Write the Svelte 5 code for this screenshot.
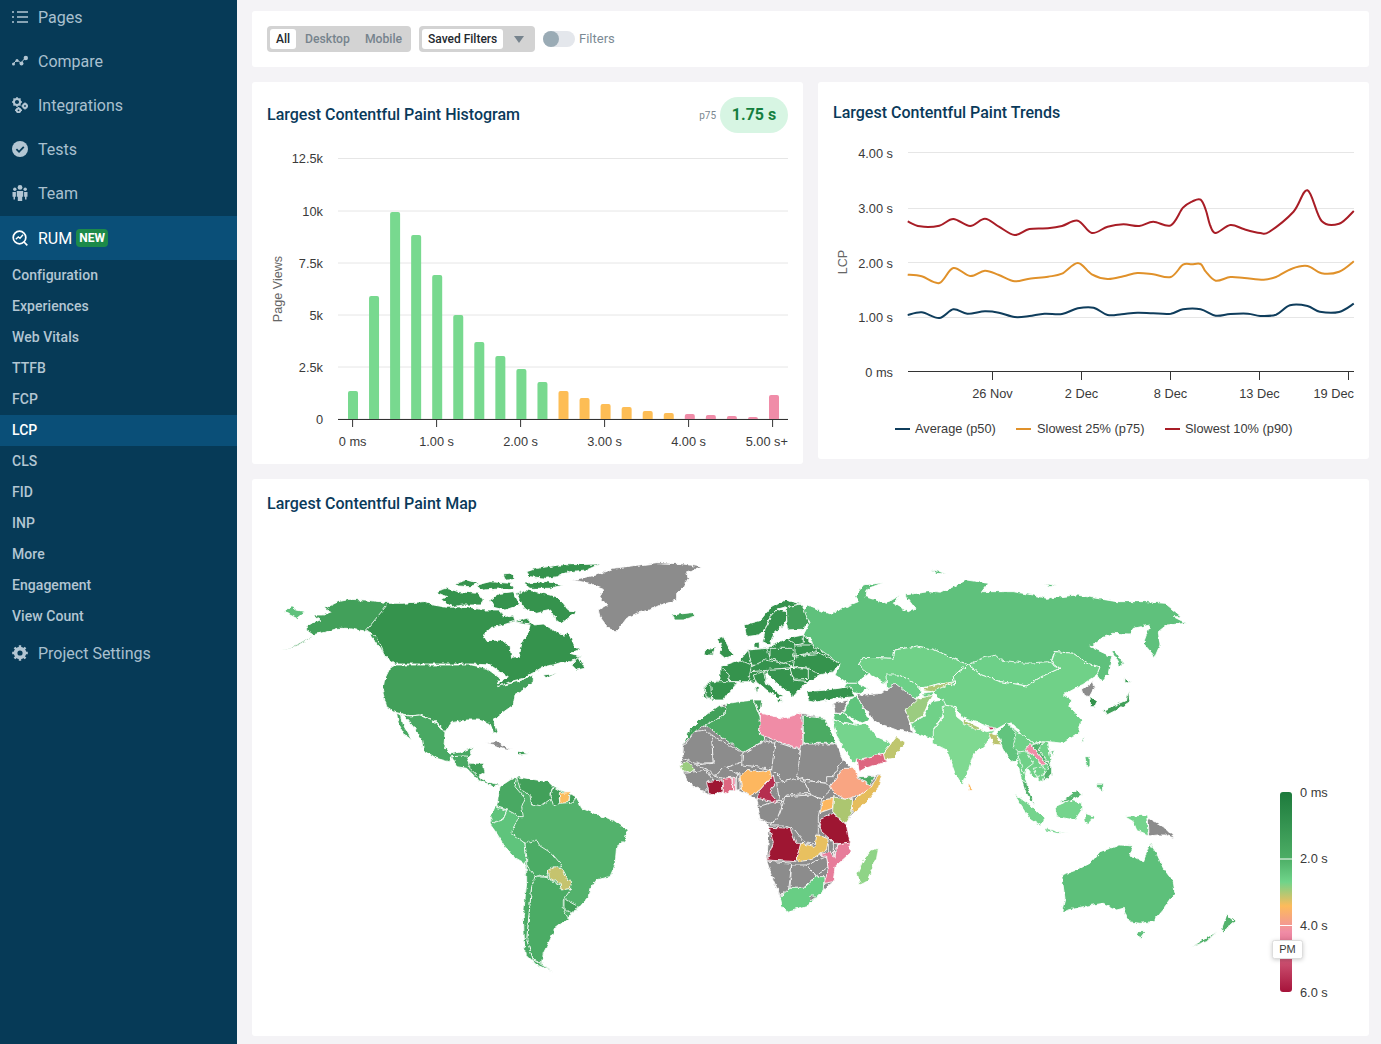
<script>
  const primary = ['Pages', 'Compare', 'Integrations', 'Tests', 'Team'];
  const subs = ['Configuration','Experiences','Web Vitals','TTFB','FCP','LCP','CLS','FID','INP','More','Engagement','View Count'];

  const G='#78d98f', O='#fdbd55', P='#f08ca8';
  const heights=[391,296,212,235,275,315,342,356,369,382,391,398,404,407,411,413,414,415,416,417,395];
  const bars=heights.map((top,i)=>({x:348+i*21.05,top,fill:i<10?G:i<16?O:P}));
  const histGrid=[[158.5,'12.5k'],[211,'10k'],[263,'7.5k'],[315,'5k'],[367,'2.5k'],[419,'0']];
  const histX=[[352.6,'0 ms'],[436.6,'1.00 s'],[520.6,'2.00 s'],[604.6,'3.00 s'],[688.6,'4.00 s'],[772.6,'5.00 s+']];
  const trendGrid=[[152.5,157.5,'4.00 s'],[208.5,212.5,'3.00 s'],[262.5,267.5,'2.00 s'],[317.5,321.5,'1.00 s'],[371.5,376.5,'0 ms']];
  const trendX=[[992.5,'26 Nov'],[1081.5,'2 Dec'],[1170.5,'8 Dec'],[1259.5,'13 Dec'],[1348.5,'19 Dec']];

  function smooth(z){
    const p=z.map(([x,y])=>[820+x/2.851,85+y/3]);
    let d=`M${p[0][0].toFixed(1)} ${p[0][1].toFixed(1)}`;
    for(let i=0;i<p.length-1;i++){
      const a=p[Math.max(i-1,0)],b=p[i],c=p[i+1],e=p[Math.min(i+2,p.length-1)];
      const c1=[b[0]+(c[0]-a[0])/6,b[1]+(c[1]-a[1])/6],c2=[c[0]-(e[0]-b[0])/6,c[1]-(e[1]-b[1])/6];
      d+=`C${c1[0].toFixed(1)} ${c1[1].toFixed(1)} ${c2[0].toFixed(1)} ${c2[1].toFixed(1)} ${c[0].toFixed(1)} ${c[1].toFixed(1)}`;
    }
    return d;
  }
  const lines=[
    ['#0f3d5c',[[250,690],[290,682],[340,699],[380,673],[420,686],[470,679],[510,683],[555,696],[597,693],[640,686],[690,687],[735,670],[780,668],[820,690],[860,688],[905,683],[950,685],[1000,686],[1035,673],[1085,673],[1128,692],[1170,687],[1220,686],[1255,693],[1300,689],[1340,661],[1390,663],[1425,680],[1480,681],[1522,656]]],
    ['#e0912a',[[250,569],[290,574],[340,594],[380,549],[428,573],[470,557],[510,570],[555,589],[597,581],[650,575],[690,566],[735,534],[775,568],[820,582],[865,574],[905,564],[950,568],[1000,576],[1035,539],[1060,538],[1085,537],[1100,560],[1128,587],[1170,576],[1210,579],[1265,584],[1300,576],[1345,551],[1390,543],[1430,565],[1480,560],[1522,529]]],
    ['#a81d26',[[250,409],[285,424],[340,422],[380,402],[428,423],[470,401],[510,425],[555,450],[597,432],[650,430],[690,423],[735,407],[775,444],[820,425],[865,418],[910,423],[950,410],[1000,421],[1035,368],[1062,349],[1085,344],[1100,375],[1112,420],[1128,444],[1170,420],[1210,433],[1255,444],[1280,441],[1350,380],[1390,316],[1430,408],[1480,416],[1522,378]]]
  ].map(([c,z])=>[c,smooth(z)]);
  const legend=[[895,915,'#0f3d5c','Average (p50)'],[1016,1037,'#e0912a','Slowest 25% (p75)'],[1165,1185,'#a81d26','Slowest 10% (p90)']];

  const CA='#35934e',US='#42a05a',MX='#4aa963',BR='#52b26c',PE='#5fc47c',RU='#5ec17b',CN='#6fd188',IN='#7fd991',AU='#5dc07a',GY='#8c8c8c',DR='#9e1232',PK='#f08ca6',OR='#fdb75f',ID='#74d48d';
  const americas=[
    [RU,'45,185 65,168 80,180 105,185 80,205 60,195'],
    [US,'355,158 285,150 240,148 205,155 165,175 185,185 160,195 130,195 150,210 115,225 105,238 130,255 170,245 205,235 230,235 262,240 290,243 320,260 345,290 345,310 325,290 300,255'],
    [US,'120,264 85,285 30,305 90,278 125,258'],
    [CA,'355,160 400,160 460,155 490,165 530,172 590,170 640,180 690,180 700,200 730,195 735,215 770,205 790,225 820,222 850,240 880,258 895,245 915,290 930,298 900,310 935,320 905,335 880,335 850,345 820,350 790,368 760,385 720,395 685,410 680,405 715,380 690,365 660,345 605,342 375,342 345,320 330,280 320,262 290,240'],
    ['#fff','640,255 665,232 690,228 730,215 780,222 775,250 755,280 748,320 725,322 720,290 695,270 650,272'],
    [CA,'495,125 530,115 565,125 625,130 640,150 630,165 580,165 545,170 515,150 530,140'],
    [CA,'555,100 590,90 625,100 600,110 565,108'],[CA,'620,105 660,95 720,100 730,115 670,118 640,120'],
    [CA,'770,65 800,55 870,45 990,42 950,60 900,65 860,80 830,85 780,80'],
    [CA,'740,130 770,120 800,125 860,140 880,160 895,180 920,185 875,220 850,200 845,180 800,190 760,175'],
    [CA,'690,130 730,125 750,165 705,180 670,172 660,150'],[CA,'700,75 725,72 735,85 705,88'],[CA,'760,100 830,95 880,105 840,115 780,115'],
    [CA,'905,345 925,320 945,355 920,360'],[CA,'820,375 860,370 830,385'],
    [GY,'905,90 980,75 1030,55 1160,38 1240,42 1300,52 1250,65 1255,85 1240,110 1220,130 1220,150 1170,165 1140,180 1100,190 1070,205 1040,245 1015,235 990,200 985,180 1010,165 990,140 1000,115 960,100'],
    [US,'1205,195 1265,188 1278,198 1240,210 1215,210'],
    [US,'375,345 605,345 650,355 690,385 680,410 740,395 790,375 790,395 760,420 735,435 730,465 695,490 670,510 682,550 672,552 660,520 625,510 590,510 545,518 525,545 500,515 475,505 450,495 420,497 375,487 350,470 338,425 345,385 360,355'],
    [MX,'400,495 420,498 450,495 480,508 500,520 525,548 522,590 540,612 575,605 612,590 595,620 570,622 545,620 535,635 500,625 460,600 455,570 430,530'],
    [MX,'380,490 395,495 400,525 425,570 405,555 385,520'],
    [MX,'545,620 590,618 600,640 640,640 645,665 625,680 650,695 690,705 670,710 625,690 590,655 560,650'],
    [US,'595,640 640,640 645,665 625,680 600,655'],
    [GY,'650,578 680,575 725,600 700,595'],[US,'745,603 775,612 745,615'],
    [BR,'690,710 740,680 800,690 850,710 920,742 935,775 985,795 1030,810 1072,840 1065,870 1040,890 1035,945 1020,980 980,990 960,1015 955,1040 930,1070 905,1088 895,1105 855,1135 840,1170 820,1210 815,1240 850,1265 800,1245 765,1210 760,1100 770,1000 765,940 730,920 705,890 680,850 660,822 663,800 680,770'],
    [MX,'740,680 735,710 765,745 755,770 760,800 735,800 712,780 680,770 690,710 720,690'],
    [US,'740,680 800,690 835,695 850,710 840,730 845,745 810,770 785,765 780,735 750,715'],
    [US,'850,710 880,728 868,745 870,760 850,768 840,735'],
    ['#fbbd5e','868,730 900,728 895,758 870,760'],
    [US,'900,730 920,742 905,760 898,755'],
    [PE,'675,770 712,782 700,805 670,825 663,800'],
    [PE,'660,822 700,808 712,780 750,800 735,820 725,850 765,880 770,920 765,940 730,920 705,890 680,850'],
    ['#4cac65','765,880 800,870 810,888 845,910 875,945 840,960 830,980 800,975 790,985 770,945 770,920'],
    ['#c5c36e','835,960 855,950 875,958 890,985 905,995 900,1020 872,1020 870,1000 838,982'],
    [US,'885,1048 925,1070 905,1088 885,1080'],
    ['#4bac65','795,980 830,982 870,1005 875,1020 905,1015 880,1050 880,1080 895,1105 855,1135 840,1170 820,1210 815,1240 790,1230 770,1170 778,1080 785,1010'],
    ['#4bac65','770,945 795,980 785,1010 778,1080 770,1170 790,1230 850,1265 800,1245 765,1210 760,1100 770,1000']
  ];
  const asia=[
    [RU,'25,135 60,150 95,165 125,145 175,125 165,110 190,75 250,68 205,85 195,110 260,130 300,105 280,130 325,155 345,145 315,105 385,95 420,100 500,60 565,70 545,95 640,95 700,105 740,115 830,105 950,125 1040,125 1095,130 1145,170 1120,170 1160,190 1100,195 1075,215 1080,255 1065,290 1030,250 1050,195 1000,205 990,222 940,220 905,235 870,260 935,290 925,340 905,365 890,345 900,320 860,310 820,280 765,275 755,305 780,325 725,350 680,378 600,365 545,345 505,315 460,295 400,268 350,258 285,270 280,295 190,292 175,315 205,340 170,370 145,370 105,345 120,315 80,285 40,270 35,240 10,225 30,185 5,160'],
    [RU,'935,275 945,275 970,310 960,318'],[RU,'390,28 420,35 440,42 410,40'],[RU,'735,72 770,75 750,80'],
    [PE,'140,370 170,370 205,385 175,402 130,385'],
    [CN,'175,315 190,292 280,295 285,270 350,258 400,268 460,295 505,315 475,335 460,350 465,375 420,370 385,380 360,385 330,360 295,345 260,350 258,375 225,350 195,335'],
    ['#6dd088','505,315 545,295 590,285 600,300 680,310 745,305 780,325 725,350 680,378 600,365 545,345'],
    [CN,'505,315 545,345 600,365 680,378 725,350 780,325 755,305 765,275 820,280 860,310 900,320 890,345 845,375 790,405 815,420 810,440 845,480 835,520 790,550 745,545 700,550 660,520 645,495 620,490 585,510 540,490 490,475 465,440 430,435 420,415 385,380 420,370 465,375 460,350 475,335'],
    ['#6dd088','258,345 295,345 330,360 360,385 365,395 350,415 320,425 280,385 260,385'],
    ['#adc774','385,378 465,365 420,385 395,395 370,392'],['#6dd088','365,400 400,395 400,410 370,412'],
    ['#9bcc80','320,430 355,415 400,405 385,430 370,465 335,488 325,480 315,455'],
    [GY,'170,400 195,405 245,400 285,370 350,420 315,450 330,490 340,520 290,510 250,495 220,480 205,455 185,440'],
    [CN,'335,490 370,470 395,425 430,420 440,440 425,470 405,505 415,535 395,535 345,520'],
    [IN,'430,435 465,440 470,470 495,490 560,515 585,510 560,550 520,585 505,630 485,672 465,640 440,570 420,560 400,550 400,510 430,470'],
    ['#adc774','490,480 555,510 530,508 490,490'],['#c23e62','565,500 590,505 570,510'],['#bcc46e','565,520 590,525 605,555 580,553'],
    [CN,'590,520 620,490 660,520 700,550 745,545 755,620 755,645 725,665 700,650 680,625 675,650 690,700 665,660 650,600 635,605 610,570 600,540'],
    ['#62c47e','590,520 620,490 650,520 640,560 660,580 650,600 635,605 610,570 600,540'],
    [CN,'652,580 680,575 700,610 680,625 675,650 665,620'],
    [PK,'675,570 690,550 715,580 740,615 725,615 705,590'],
    ['#54b36e','695,555 730,545 715,570 755,620 755,645 725,665 745,620 715,580'],
    [CN,'700,625 730,620 735,640 710,650'],
    [BR,'665,660 680,670 690,700 705,735 690,720 675,690'],
    [ID,'640,700 690,735 735,775 725,798 690,775'],[ID,'735,805 805,822 770,820 735,812'],
    [ID,'765,740 810,720 845,730 845,750 825,780 770,770'],['#58b872','780,730 830,690 845,705 815,720'],
    [ID,'855,760 885,770 860,795 855,780'],[PE,'855,590 870,590 870,620 858,615'],[PE,'890,670 910,670 910,692 890,685'],
    [ID,'975,770 1040,765 1045,825 1010,810 1000,785'],[GY,'1045,775 1090,800 1125,835 1095,825 1075,825 1047,828'],
    [AU,'785,945 830,930 870,910 900,875 960,855 1000,858 990,885 1030,905 1050,850 1070,880 1090,925 1120,965 1125,1000 1090,1050 1060,1085 1020,1090 985,1085 970,1045 950,1050 910,1030 850,1040 785,1055 795,1015'],
    [AU,'1010,1115 1035,1115 1020,1135'],[BR,'1175,1160 1250,1115 1220,1145'],[BR,'1265,1110 1280,1065 1305,1085 1270,1115'],
    [US,'935,440 980,420 985,390 990,425 950,450 920,465 910,450'],[US,'975,355 995,365 975,372'],
    [CA,'870,410 890,425 885,440 872,440'],[GY,'845,390 880,365 885,380 868,410 850,405'],
    [PE,'850,530 855,545 845,545'],[OR,'505,665 518,690 505,692'],[PE,'750,575 765,570 755,585']
  ];
  const emea=[
    [CA,'222,135 270,122 300,85 345,60 395,72 350,80 320,88 300,110 285,150 265,165 230,170'],
    [CA,'285,150 300,110 320,88 350,95 350,115 335,140 312,160 300,195 278,185'],
    [US,'350,80 395,72 418,130 395,148 352,150 350,115'],
    [CA,'140,175 160,170 175,200 192,225 165,235 148,220 155,200'],[CA,'105,210 135,200 130,225 102,225'],
    [CA,'100,350 105,310 150,300 150,260 180,258 210,240 235,210 290,205 350,175 400,165 430,195 510,250 490,275 450,285 415,305 395,320 370,350 345,330 300,295 280,310 235,305 205,305 175,340 160,360 125,360'],
    [CA,'150,260 210,240 245,255 240,280 235,305 175,305 178,285'],
    [CA,'110,305 205,305 175,340 160,360 125,360 120,320'],[CA,'105,310 122,310 125,355 108,350'],
    [CA,'235,210 290,205 300,235 280,260 245,255'],[CA,'300,205 365,205 375,240 340,250 300,235'],
    [CA,'252,188 268,186 268,205 252,205'],
    [CA,'350,175 400,165 400,190 375,195'],[CA,'375,195 430,195 440,215 375,228'],
    [CA,'375,228 450,220 510,250 490,275 450,285 415,265 370,260'],[CA,'360,262 415,265 415,295 370,298'],
    [CA,'285,240 340,250 370,262 300,270 245,275 245,260'],
    [CA,'290,268 360,265 370,300 415,305 395,320 370,350 345,330 300,295'],
    ['#fff','285,275 300,292 345,330 330,335 292,305'],
    [CA,'250,285 280,275 290,310 340,350 325,355 290,330 255,300'],[CA,'320,358 340,360 325,368'],[CA,'255,320 265,320 262,345'],
    [CA,'410,335 470,330 540,320 555,350 500,355 440,365 415,360'],
    [ID,'490,420 560,435 590,430 620,470 665,490 640,520 570,540 555,550 530,520 500,470'],
    ['#dd6680','562,540 640,520 652,545 585,565 568,575'],['#bfc66e','640,520 680,470 705,490 670,535 645,540'],
    [PE,'540,360 560,345 585,395 598,420 575,430 520,400'],[PE,'495,400 520,400 560,435 490,420'],[GY,'490,370 535,360 520,400 495,400'],
    [GY,'38,495 60,450 100,410 150,375 250,360 275,360 268,405 340,415 395,400 465,415 498,490 520,540 565,590 635,585 625,625 590,665 550,700 525,730 540,785 540,820 495,860 490,905 460,930 415,975 350,995 330,950 310,900 290,843 298,742 265,700 265,680 260,655 240,648 200,630 118,645 80,625 42,580 32,555 38,535'],
    [US,'38,495 60,450 100,410 150,375 170,385 165,405 110,435 80,450 60,470'],
    ['#4bab64','170,370 250,360 270,410 285,480 220,518 105,435 165,405'],[US,'250,360 275,360 270,405'],
    [PK,'272,400 340,415 395,400 400,510 312,480 268,462'],['#4bab64','400,408 465,415 498,490 400,490'],
    [GY,'40,500 75,455 105,450 125,468 130,548 75,550 38,535'],[GY,'125,465 215,518 218,545 160,565 135,590 115,570 75,555 130,550'],
    [GY,'218,520 285,482 315,490 320,530 305,570 260,560 215,555'],[GY,'315,485 390,510 390,550 380,595 345,610 320,580 305,570'],
    [GY,'395,492 500,492 518,540 490,590 470,590 470,610 405,600 380,590 385,560'],[GY,'400,600 470,610 488,625 455,655 425,650'],
    [GY,'320,610 380,595 405,610 420,640 350,645 330,670'],[GY,'345,650 425,645 455,660 445,710 445,760 440,790 405,790 375,750 340,735 300,735 330,700'],
    [GY,'265,680 330,660 335,680 320,720 300,730 270,720'],
    ['#9bcc80','32,555 50,543 75,570 60,578 35,570'],[GY,'42,580 110,570 130,605 105,635 80,625 55,605'],[GY,'135,590 165,558 205,585 195,600 160,595'],
    [DR,'110,605 155,600 160,635 118,645'],['#dd6680','160,595 185,592 188,628 160,645'],[PK,'188,592 195,592 197,630 188,630'],[GY,'200,590 210,580 210,630 200,630'],
    [OR,'210,590 230,568 265,575 300,570 305,590 270,630 240,648 215,630'],['#b52d50','310,585 315,610 300,640 325,668 285,660 260,655 270,630'],
    ['#f9a582','520,565 555,565 565,595 605,620 570,645 525,658 495,640 480,620'],['#4bab64','565,590 615,590 600,615'],
    ['#e5bd5c','620,590 635,585 625,625 590,665 550,700 545,670 570,645 605,620'],['#acc670','490,650 525,658 548,655 545,700 525,730 488,695'],
    [OR,'460,660 490,655 487,685 450,698'],[DR,'458,715 490,700 530,735 540,790 495,790 455,755 448,730'],
    ['#e8c05e','378,810 395,790 435,800 440,765 475,775 470,810 420,840 385,845'],[DR,'298,742 360,745 378,790 392,790 378,845 290,840 310,790'],
    [GY,'290,843 365,850 355,940 330,945 310,900'],[GY,'365,855 410,855 440,890 400,925 360,925'],[GY,'410,855 470,830 475,860 440,888'],
    ['#e77c9a','450,825 490,810 495,835 500,795 540,785 540,820 495,860 490,905 462,910 475,870 470,830'],[GY,'478,780 490,785 490,830 478,810'],
    ['#68ce84','330,950 360,925 400,925 440,890 462,890 460,930 415,975 350,995 335,975'],[GY,'416,952 430,944 437,952 424,961'],
    ['#8fd487','605,810 625,805 620,835 590,905 570,915 562,880 580,840']
  ];
  const frames=[[270,550,americas],[800,560,asia],[670,580,emea]];
  const ticks=[[793,'0 ms'],[859,'2.0 s'],[926,'4.0 s'],[993,'6.0 s']];
</script>

{#snippet navIcon(name)}
  <svg class="ico" viewBox="0 0 16 16" aria-hidden="true">
    {#if name==='Pages'}
      <path d="M5 3h11M5 8h11M5 13h11" class="ln"/><path d="M0 3h2M0 8h2M0 13h2" class="ln"/>
    {:else if name==='Compare'}
      <path d="M1 11 5 7l4 3 5-6" class="thin"/><circle cx="1.5" cy="11" r="1.5"/><circle cx="5" cy="7.5" r="1.5"/><circle cx="9.5" cy="10.5" r="2"/><circle cx="13.8" cy="5" r="2.2"/>
    {:else if name==='Integrations'}
      <circle cx="5" cy="5" r="3.1" class="ring"/><circle cx="13" cy="9" r="1.9" class="ring"/><circle cx="6.5" cy="13.3" r="1.9" class="ring"/>
      <path d="M5 0v2.5M5 7.500V10M0 5h2.500M7.500 5H10M1.500 1.500l1.800 1.800M6.700 6.700l1.800 1.800M1.500 8.500l1.800-1.800M6.700 3.300l1.800-1.800M13 5.500v1.500M13 11v1.500M9.500 9H11M15 9h1M6.500 10v1.300M6.500 15.300v.7M3 13.300h1.500M8.500 13.300H10" class="thick"/>
    {:else if name==='Tests'}
      <circle cx="8" cy="8" r="8"/><path d="M4.400 8.200 7 10.800l4.800-5" class="check"/>
    {:else if name==='Team'}
      <circle cx="8" cy="2.400" r="2.400"/><circle cx="2.800" cy="4.200" r="1.700"/><circle cx="13.200" cy="4.200" r="1.700"/>
      <path d="M4.800 6h6.400v5.800h-1V16H5.800v-4.200h-1zM.5 7h3.400v4.800H3v2.700H1.500v-2.700h-1zM12.100 7h3.400v4.800h-1v2.700H13v-2.700h-.9z"/>
    {:else if name==='RUM'}
      <circle cx="7.500" cy="7.500" r="6.300" class="ring2"/><path d="m12 12 3.300 3.300" class="ring2"/><path d="M3.800 9.200 6.300 7l1.700 1.300 3-3.500" class="thin2"/>
    {:else}
      <circle cx="8" cy="8" r="4.400" class="ring3"/><path d="M8 .2v3M8 12.800v3M.2 8h3M12.800 8h3M2.500 2.500l2.100 2.100M11.400 11.400l2.100 2.100M2.500 13.500l2.100-2.100M11.400 4.600l2.100-2.100" class="ring4"/>
    {/if}
  </svg>
{/snippet}

<div class="page">
  <aside class="side">
    <nav class="nav">
      {#each primary as item}
        <div class="nav-item">{@render navIcon(item)}<span>{item}</span></div>
      {/each}
      <div class="nav-item active">{@render navIcon('RUM')}<span>RUM</span><b class="new">NEW</b></div>
      {#each subs as s}
        <div class="sub" class:on={s==='LCP'}>{s}</div>
      {/each}
      <div class="nav-item settings">{@render navIcon('Project Settings')}<span>Project Settings</span></div>
    </nav>
  </aside>

  <main class="main">
    <section class="card bar">
      <div class="seg first">
        <span class="opt sel">All</span><span class="opt desk">Desktop</span><span class="opt">Mobile</span>
      </div>
      <div class="seg saved">
        <span class="opt sel">Saved Filters</span><i class="caret"></i>
      </div>
      <span class="toggle"><i></i></span>
      <span class="flabel">Filters</span>
    </section>

    <div class="row">
      <section class="card hist">
        <header class="hist-head">
          <h2>Largest Contentful Paint Histogram</h2>
          <small>p75</small>
          <strong class="pill">1.75 s</strong>
        </header>
        <svg class="chart" width="551" height="314" viewBox="252 150 551 314">
          {#each histGrid as [y,l]}
            <line x1="338" x2="788" y1={y} y2={y} class="grid"/>
            <text x="323" y={y+4.5} text-anchor="end" class="tx">{l}</text>
          {/each}
          {#each bars as b}
            <path d="M{b.x} 419V{b.top+2}q0-2 2-2h6q2 0 2 2V419z" fill={b.fill}/>
          {/each}
          <line x1="338" x2="788" y1="419.5" y2="419.5" class="axis"/>
          {#each histX as [x,l],i}
            <line x1={x} x2={x} y1="419" y2="427" class="axis"/>
            <text x={i===5?788:x} y="446" text-anchor={i===5?'end':'middle'} class="tx">{l}</text>
          {/each}
          <text transform="translate(282 289) rotate(-90)" text-anchor="middle" class="ttl">Page Views</text>
        </svg>
      </section>

      <section class="card trend">
        <h2 class="trend-head">Largest Contentful Paint Trends</h2>
        <svg class="chart" width="551" height="317" viewBox="818 142 551 317">
          {#each trendGrid as [y,ty,l]}
            <line x1="908" x2="1354" y1={y} y2={y} class="grid"/>
            <text x="893" y={ty} text-anchor="end" class="tx">{l}</text>
          {/each}
          {#each lines as [c,d]}
            <path d={d} fill="none" stroke={c} stroke-width="2"/>
          {/each}
          <line x1="908" x2="1354" y1="371.5" y2="371.5" class="axis"/>
          {#each trendX as [x,l],i}
            <line x1={x} x2={x} y1="371" y2="380" class="axis"/>
            <text x={i===4?1354:x} y="398" text-anchor={i===4?'end':'middle'} class="tx">{l}</text>
          {/each}
          <text transform="translate(847 262) rotate(-90)" text-anchor="middle" class="ttl">LCP</text>
          {#each legend as [x,tx,c,l]}
            <line x1={x} x2={x+15} y1="429" y2="429" stroke={c} stroke-width="2"/>
            <text x={tx} y="433" class="tx">{l}</text>
          {/each}
        </svg>
      </section>
    </div>

    <section class="card map">
      <h2 class="map-head">Largest Contentful Paint Map</h2>
      <svg class="chart" width="1117" height="520" viewBox="252 516 1117 520">
        <defs>
          <linearGradient id="scale" x1="0" y1="0" x2="0" y2="1">
            <stop offset="0" stop-color="#1d7a3c"/>
            <stop offset=".33" stop-color="#4cad65"/>
            <stop offset=".45" stop-color="#70d48a"/>
            <stop offset=".57" stop-color="#fdbb5b"/>
            <stop offset=".7" stop-color="#f08ca6"/>
            <stop offset="1" stop-color="#a6133a"/>
          </linearGradient>
          <filter id="rough" filterUnits="userSpaceOnUse" x="252" y="516" width="1010" height="520">
            <feTurbulence type="fractalNoise" baseFrequency=".22" numOctaves="2" seed="4" result="n"/>
            <feDisplacementMap in="SourceGraphic" in2="n" scale="4" xChannelSelector="R" yChannelSelector="G"/>
          </filter>
        </defs>
        <g filter="url(#rough)">
          {#each frames as [ox,oy,shapes]}
            <g transform="translate({ox} {oy}) scale(.3333)" stroke="#fff" stroke-width="2.5" stroke-linejoin="round">
              {#each shapes as [fill,pts]}
                <polygon points={pts} {fill}/>
              {/each}
            </g>
          {/each}
        </g>
        <rect x="1280" y="792" width="12" height="200" rx="3" fill="url(#scale)"/>
        <path d="M1280 859h12M1280 925.5h12" stroke="#fff"/>
        {#each ticks as [y,l]}
          <text x="1300" y={y+4} class="tx">{l}</text>
        {/each}
        <rect x="1272.5" y="940.5" width="30" height="18" rx="2" fill="#fff" stroke="#ddd" class="tip"/>
        <text x="1287.5" y="953" text-anchor="middle" class="tx small">PM</text>
      </svg>
    </section>
  </main>
</div>

<style>
  :global(body){margin:0;background:#f4f3f6;font-family:Roboto,"Liberation Sans",sans-serif}
  .page{display:flex;min-height:1044px;height:1044px;overflow:hidden}
  .side{flex:0 0 237px;background:#063a57;color:#a9c0cf;overflow:hidden}
  .nav{margin-top:-5px}
  .nav-item{display:flex;align-items:center;height:44px;padding-left:12px;font-size:16px}
  .nav-item span{margin-left:10px}
  .ico{width:16px;height:16px;fill:#b3c6d3;flex:none}
  .ln{stroke:#b3c6d3;stroke-width:1.5;fill:none}
  .thin{stroke:#b3c6d3;stroke-width:1;fill:none}
  .thick{stroke:#b3c6d3;stroke-width:1.4;fill:none}
  .ring{fill:none;stroke:#b3c6d3;stroke-width:2}
  .check{fill:none;stroke:#063a57;stroke-width:1.8}
  .active{background:#0a4f78;color:#fff;margin-top:1px}
  .active .ico{fill:#fff}
  .ring2{fill:none;stroke:currentColor;stroke-width:1.7}
  .thin2{fill:none;stroke:currentColor;stroke-width:1.4}
  .ring3{fill:none;stroke:#b3c6d3;stroke-width:3.6}
  .ring4{fill:none;stroke:#b3c6d3;stroke-width:2.4}
  .settings{margin-top:-1px}
  .new{margin-left:4px;padding:0 3px;height:18px;line-height:18px;border-radius:4px;background:#1c8a4a;color:#fff;font-size:12px;font-weight:700}
  .sub{height:31px;line-height:31px;padding-left:12px;font-size:14px;font-weight:500;letter-spacing:.05px;color:#b3c6d3}
  .sub.on{background:#0a4f78;color:#fff}
  .main{flex:1;padding:11px 12px 0 15px;display:flex;flex-direction:column;gap:15px}
  .card{background:#fff;border-radius:3px}
  .bar{display:flex;align-items:center;height:56px;padding-left:15px;flex:none}
  .seg{display:flex;align-items:center;height:26px;box-sizing:border-box;padding:3px;background:#d3d3d3;border-radius:4px;margin-right:8px;font-size:12.2px;font-weight:500;color:#76838d}
  .first{width:144px}
  .opt{padding:0 7.5px;line-height:20px}
  .opt.sel{background:#fff;color:#24292e;border-radius:3px;padding:0 6px;font-size:12px}
  .desk{margin-left:1.5px}
  .saved{width:116px}
  .caret{margin-left:11px;border:5px solid transparent;border-top:7px solid #76838d;border-bottom:0}
  .toggle{width:32px;height:16px;border-radius:8px;background:#e4e7ec;display:flex}
  .toggle i{width:16px;height:16px;border-radius:50%;background:#9aabb5}
  .flabel{margin:0 0 1px 4px;font-size:13px;color:#7b8a95}
  .row{display:grid;grid-template-columns:551px 551px;gap:15px;align-items:start;flex:none}
  h2{margin:0;font-size:16px;font-weight:500;color:#0a3a5a;line-height:22px}
  .hist{height:382px}
  .hist-head{display:flex;align-items:center;height:68px;box-sizing:border-box;padding:15px 15px 17px}
  .hist-head h2{flex:1}
  .hist-head small{font-size:10px;color:#7b8790;margin-right:4px}
  .pill{width:68px;height:36px;line-height:36px;text-align:center;border-radius:18px;background:#d7f5e3;color:#157f3f;font-size:16px;font-weight:700}
  .trend{height:377px}
  .trend-head{height:60px;box-sizing:border-box;padding:20px 15px 0}
  .chart{display:block}
  .grid{stroke:#e6e6e6;stroke-width:1}
  .axis{stroke:#333;stroke-width:1}
  .tx{font-family:"Liberation Sans",Arial,sans-serif;font-size:12.8px;fill:#3a3a3a}
  .ttl{font-family:"Liberation Sans",Arial,sans-serif;font-size:12.6px;fill:#666}
  .small{font-size:11px}
  .tip{filter:drop-shadow(0 1px 2px rgba(0,0,0,.2))}
  .map{height:557px;flex:none}
  .map-head{height:37px;box-sizing:border-box;padding:14px 15px 0}
</style>
